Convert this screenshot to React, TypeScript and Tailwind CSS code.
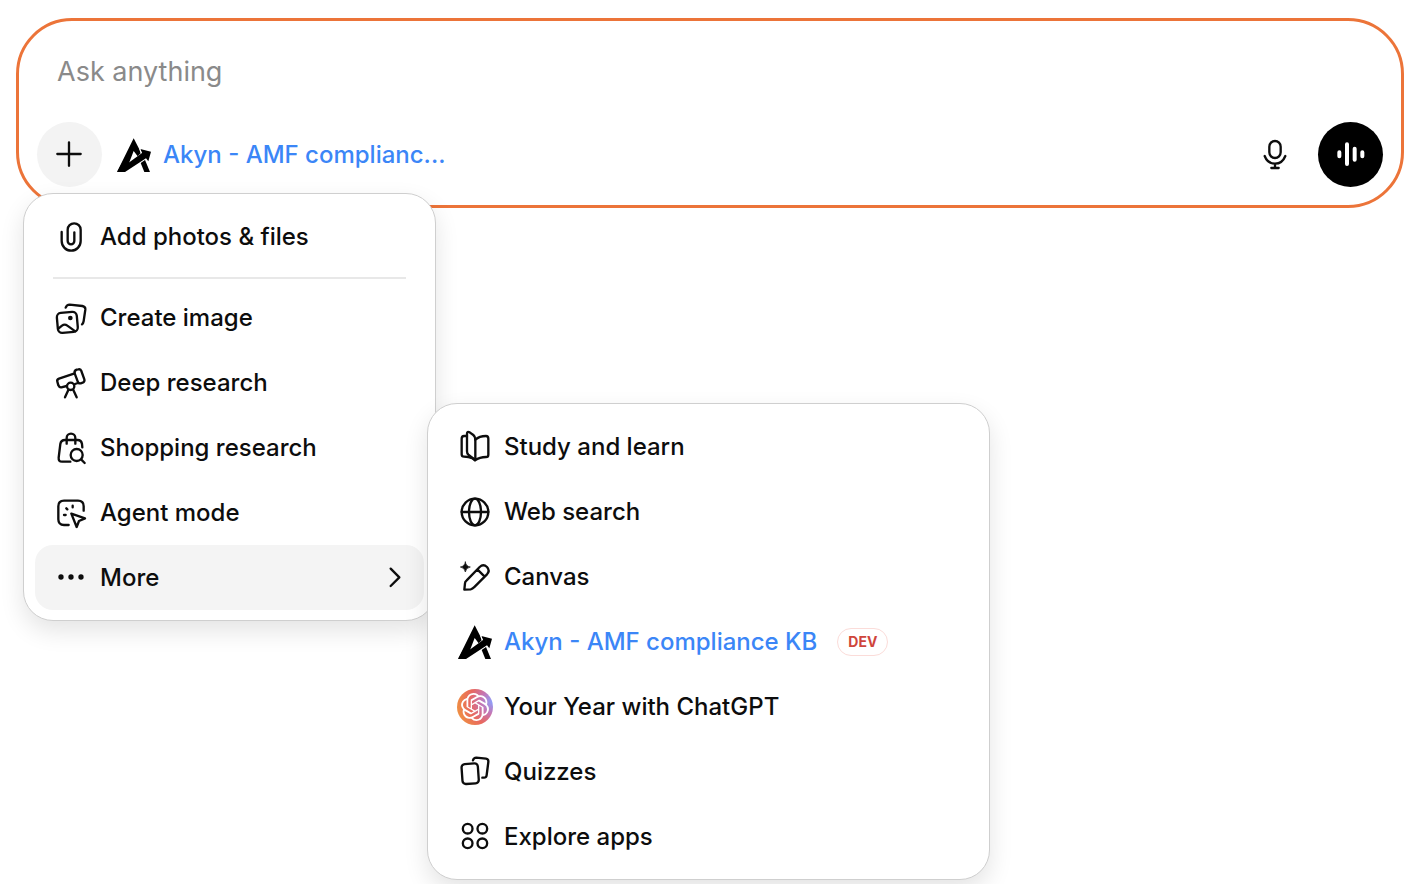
import type { ReactNode } from "react";
import { SiOpenai } from "react-icons/si";

function Glyph({ box, children }: { box: string; children: ReactNode }) {
  return (
    <svg
      viewBox={box}
      className="size-9"
      fill="none"
      stroke="currentColor"
      strokeWidth="7"
      strokeLinecap="round"
      strokeLinejoin="round"
      aria-hidden="true"
    >
      {children}
    </svg>
  );
}

const PaperclipIcon = () => (
  <Glyph box="39 27 108 108">
    <path d="M65 66v27a28.5 29 0 0 0 57 0V59a19.5 19 0 0 0-39 0v34a10 10 0 0 0 20 0V67" />
  </Glyph>
);

const ImageIcon = () => (
  <Glyph box="39 268 108 108">
    <rect x="52" y="305" width="60" height="60" rx="13" transform="rotate(-5 82 335)" />
    <path d="M77 291q3-9 12-9l38 4q10 2 9 11l-5 34q-1 7-5 10M55 354l11-9q8-6 16 0l24 17" />
    <circle cx="91" cy="322" r="7" fill="currentColor" stroke="none" />
  </Glyph>
);

const TelescopeIcon = () => (
  <Glyph box="39 44 108 108">
    <path d="M104 69q-2-8 6-11l5-1q7-2 9 5l9 25q2 7-5 10l-6 2q-7 1-9-6z" />
    <path d="M104 69 57 85q-7 3-5 9l3 11q3 7 9 6l16-4M105 101l9-3M85 119l-10 22M100 119l10 22" />
    <circle cx="92" cy="108" r="11" />
  </Glyph>
);

const ShoppingIcon = () => (
  <Glyph box="39 239 108 108">
    <path d="M127 291l-1-10q-2-12-13-12H75q-12 0-14 12l-5 41q-1 12 10 12h25M80 280v-17a13 13 0 0 1 26 0v17M124 328l10 10" />
    <circle cx="110" cy="314" r="18" />
  </Glyph>
);

const AgentIcon = () => (
  <Glyph box="39 30 108 108">
    <path d="M131 77V64q0-17-17-17H72q-17 0-17 17v39q0 17 17 17h14M94 86l41 14-18 8-7 18zM98 62v5M79 70l3 3M72 90h5" />
  </Glyph>
);

const DotsIcon = () => (
  <Glyph box="39 225 108 108">
    <g fill="currentColor" stroke="none">
      <circle cx="63" cy="276" r="8" />
      <circle cx="93" cy="276" r="8" />
      <circle cx="123" cy="276" r="8" />
    </g>
  </Glyph>
);

const BookIcon = () => (
  <Glyph box="36 27 108 108">
    <path d="M66 48h-9q-7 0-7 8v47q0 7 7 7l13 1q14 2 20 10 14-10 33-10 7 0 7-7V56q0-8-7-8-20 0-32 11v61" />
    <path d="M91 59q0-9-6-14l-11-8q-8-4-8 4v53q0 6 4 10l20 16" />
  </Glyph>
);

const GlobeIcon = () => (
  <Glyph box="36 221 108 108">
    <circle cx="90" cy="275" r="40" />
    <ellipse cx="90" cy="275" rx="18" ry="40" />
    <path d="M50 275h80" />
  </Glyph>
);

const CanvasIcon = () => (
  <Glyph box="36 27 108 108">
    <path d="M58 119l2-19q0-5 5-9l39-40q11-10 22 0 10 11 0 22l-39 39q-4 5-10 6zM97 58l22 22" />
    <path
      d="M61 36q2 13 15 15-13 2-15 15-2-13-15-15 13-2 15-15z"
      fill="currentColor"
      strokeWidth="2"
    />
  </Glyph>
);

const CardsIcon = () => (
  <Glyph box="36 28 108 108">
    <rect x="51" y="57" width="49" height="60" rx="10" transform="rotate(-4 76 87)" />
    <path d="M84 47q2-8 10-8l29 3q8 1 7 10l-5 39q-1 9-9 8h-4" />
  </Glyph>
);

const AppsIcon = () => (
  <Glyph box="36 221 108 108">
    <circle cx="68" cy="250" r="14.5" />
    <circle cx="112" cy="250" r="14.5" />
    <circle cx="68" cy="294" r="14.5" />
    <circle cx="112" cy="294" r="14.5" />
  </Glyph>
);

const AkynLogo = () => (
  <svg viewBox="-3 -4 108 108" className="size-9 text-black" fill="currentColor" aria-hidden="true">
    <path d="M50 0 67 33 71 45 62 54 50 38 37 72 0 101z" />
    <path d="M71 74 84 65 99 101H82z" />
    <path d="M0 101 20 66 37 72 75 44 70 32 102 40 94 69 87 60 24 101z" />
    <path d="M68 31 73 44" stroke="white" strokeWidth="3" fill="none" />
  </svg>
);

const YearBadge = () => (
  <span className="flex size-9 items-center justify-center rounded-full bg-[radial-gradient(circle_at_100%_35%,#8aa2ff,#c576b4_28%,#e8685f_55%,#f0953f_90%)] text-white">
    <SiOpenai className="size-7" aria-hidden="true" />
  </span>
);

type Entry = { label: string; icon: ReactNode; accent?: boolean; badge?: string };

const tools: Entry[] = [
  { label: "Create image", icon: <ImageIcon /> },
  { label: "Deep research", icon: <TelescopeIcon /> },
  { label: "Shopping research", icon: <ShoppingIcon /> },
  { label: "Agent mode", icon: <AgentIcon /> },
];

const moreTools: Entry[] = [
  { label: "Study and learn", icon: <BookIcon /> },
  { label: "Web search", icon: <GlobeIcon /> },
  { label: "Canvas", icon: <CanvasIcon /> },
  { label: "Akyn - AMF compliance KB", icon: <AkynLogo />, accent: true, badge: "DEV" },
  { label: "Your Year with ChatGPT", icon: <YearBadge /> },
  { label: "Quizzes", icon: <CardsIcon /> },
  { label: "Explore apps", icon: <AppsIcon /> },
];

const panel =
  "absolute rounded-[30px] border border-[#cfcfcf] bg-white px-[11px] py-[10px] shadow-[0_10px_24px_rgba(0,0,0,0.11)]";
const row =
  "flex h-[65px] w-full items-center gap-[11px] rounded-[18px] px-[18px] text-left text-[24px] whitespace-nowrap hover:bg-[#f4f4f4]";

function MenuItem({ label, icon, accent, badge }: Entry) {
  return (
    <li>
      <button type="button" className={row}>
        {icon}
        <span className={accent ? "text-[#3b86f7]" : ""}>{label}</span>
        {badge && (
          <span className="ml-[9px] flex h-7 items-center rounded-full border border-[#fbdcd9] px-[10px] text-[14px] font-bold text-[#cf453c]">
            {badge}
          </span>
        )}
      </button>
    </li>
  );
}

function ToolMenu() {
  return (
    <ul className={`${panel} top-full -left-[14px] z-10 mt-[6px] w-[413px]`}>
      <MenuItem label="Add photos & files" icon={<PaperclipIcon />} />
      <li className="mx-[18px] mt-2 mb-[6px] h-[2px] bg-[#e8e8e8]" />
      {tools.map((t) => (
        <MenuItem key={t.label} {...t} />
      ))}
      <li className="relative">
        <button type="button" aria-expanded="true" className={`${row} bg-[#f4f4f4] pr-[14px]`}>
          <DotsIcon />
          <span className="flex-1">More</span>
          <svg
            viewBox="0 0 90 90"
            className="size-[30px]"
            fill="none"
            stroke="currentColor"
            strokeWidth="7"
            strokeLinecap="round"
            strokeLinejoin="round"
            aria-hidden="true"
          >
            <path d="M32 17l26 26-26 26" />
          </svg>
        </button>
        <ul className={`${panel} -bottom-[270px] left-full ml-[3px] w-[563px]`}>
          {moreTools.map((t) => (
            <MenuItem key={t.label} {...t} />
          ))}
        </ul>
      </li>
    </ul>
  );
}

export default function App() {
  return (
    <main className="min-h-screen bg-white px-4 pt-[18px] pr-[22px] font-['Inter',sans-serif] font-[450] text-[#0d0d0d]">
      <form className="rounded-[56px] border-[3px] border-[#ec7439] px-[18px] pb-[18px]">
        <input
          type="text"
          aria-label="Ask anything"
          placeholder="Ask anything"
          className="mt-[31px] mb-[30px] block h-10 w-full bg-transparent px-5 text-[27px] font-normal outline-none placeholder:text-[#8a8a8a]"
        />
        <div className="flex items-center">
          <div className="relative">
            <button
              type="button"
              aria-label="Add"
              className="flex size-[65px] items-center justify-center rounded-full bg-[#f3f3f3]"
            >
              <svg viewBox="0 0 108 108" className="size-9" stroke="currentColor" strokeWidth="7" strokeLinecap="round" aria-hidden="true">
                <path d="M16 51h70M51 16v70" />
              </svg>
            </button>
            <ToolMenu />
          </div>
          <button
            type="button"
            className="ml-[14px] flex items-center gap-[11px] text-[24px] whitespace-nowrap text-[#3b86f7]"
          >
            <AkynLogo />
            <span>Akyn - AMF complianc...</span>
          </button>
          <div className="ml-auto flex gap-[10px]">
            <button type="button" aria-label="Dictate" className="flex size-[65px] items-center justify-center rounded-full">
              <svg
                viewBox="54 110 108 108"
                className="size-9"
                fill="none"
                stroke="currentColor"
                strokeWidth="7"
                strokeLinecap="round"
                aria-hidden="true"
              >
                <rect x="88" y="122" width="34" height="51" rx="17" />
                <path d="M74 167q9 23 31 23t31-23M105 190v13M94 203h22" />
              </svg>
            </button>
            <button
              type="button"
              aria-label="Voice mode"
              className="flex size-[65px] items-center justify-center rounded-full bg-black text-white"
            >
              <svg viewBox="279 110 108 108" className="size-9" stroke="currentColor" strokeWidth="12" strokeLinecap="round" aria-hidden="true">
                <path d="M298 156v12M321 132v59M344 145v33M367 156v12" />
              </svg>
            </button>
          </div>
        </div>
      </form>
    </main>
  );
}
